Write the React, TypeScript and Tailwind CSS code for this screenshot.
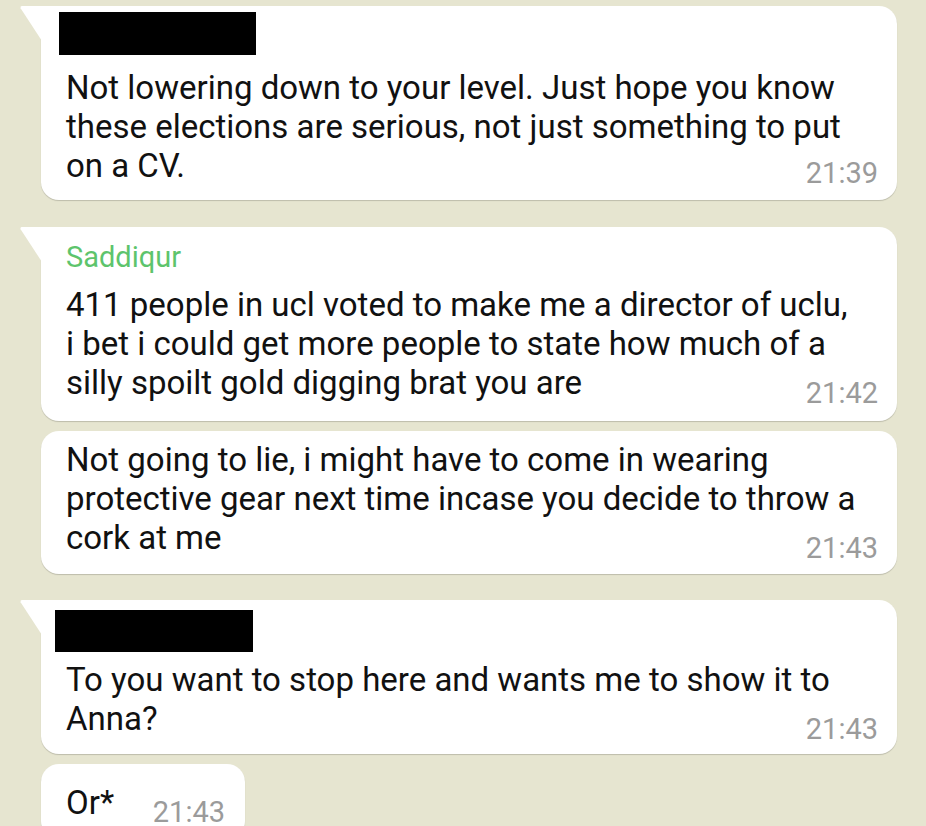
import React from "react";

const Tail = () => (
  <svg
    className="absolute top-0 left-[-21px]"
    width="22"
    height="36"
    viewBox="0 0 22 36"
  >
    <path d="M2 0 H22 V35 L0.6 2.2 Q0 0 2 0 Z" fill="#ffffff" />
  </svg>
);

const Time = ({ t }: { t: string }) => (
  <div className="flex justify-end">
    <span className="text-[29px] leading-[29px] text-[#9b9b9b]">{t}</span>
  </div>
);

const Lines = ({ lines }: { lines: string[] }) => (
  <div className="text-[33px] leading-[39px] text-[#111111] whitespace-nowrap">
    {lines.map((l, i) => (
      <div key={i}>{l}</div>
    ))}
  </div>
);

export default function App() {
  return (
    <div
      className="w-[926px] h-[826px] overflow-hidden bg-[#e6e5d0] pt-[6px] pl-[41px] pr-[29px]"
      style={{ fontFamily: "Roboto, 'Noto Sans', sans-serif" }}
    >
      {/* Bubble 1 */}
      <div className="relative bg-white rounded-r-[18px] rounded-bl-[18px] shadow-[0_1px_1px_rgba(0,0,0,0.18)] pl-[18px] pr-[19px] pt-[6px] pb-[12px]">
        <Tail />
        <div className="w-[197px] h-[43px] bg-black" />
        <div className="pl-[7px] mt-[13px]">
          <Lines
            lines={[
              "Not lowering down to your level. Just hope you know",
              "these elections are serious, not just something to put",
              "on a CV.",
            ]}
          />
          <div className="mt-[-26px]">
            <Time t="21:39" />
          </div>
        </div>
      </div>

      {/* Bubble 2 */}
      <div className="relative mt-[27px] bg-white rounded-r-[18px] rounded-bl-[18px] shadow-[0_1px_1px_rgba(0,0,0,0.18)] pl-[25px] pr-[19px] pt-[15px] pb-[13px]">
        <Tail />
        <div className="text-[29px] leading-[30px] text-[#5dc46c]">Saddiqur</div>
        <div className="mt-[13px]">
          <Lines
            lines={[
              "411 people in ucl voted to make me a director of uclu,",
              "i bet i could get more people to state how much of a",
              "silly spoilt gold digging brat you are",
            ]}
          />
          <div className="mt-[-23px]">
            <Time t="21:42" />
          </div>
        </div>
      </div>

      {/* Bubble 3 */}
      <div className="relative mt-[10px] bg-white rounded-[18px] shadow-[0_1px_1px_rgba(0,0,0,0.18)] pl-[25px] pr-[19px] pt-[9px] pb-[11px]">
        <Lines
          lines={[
            "Not going to lie, i might have to come in wearing",
            "protective gear next time incase you decide to throw a",
            "cork at me",
          ]}
        />
        <div className="mt-[-23px]">
          <Time t="21:43" />
        </div>
      </div>

      {/* Bubble 4 */}
      <div className="relative mt-[26px] bg-white rounded-r-[18px] rounded-bl-[18px] shadow-[0_1px_1px_rgba(0,0,0,0.18)] pl-[14px] pr-[19px] pt-[10px] pb-[10px]">
        <Tail />
        <div className="w-[198px] h-[42px] bg-black" />
        <div className="pl-[11px] mt-[8px]">
          <Lines
            lines={[
              "To you want to stop here and wants me to show it to",
              "Anna?",
            ]}
          />
          <div className="mt-[-23px]">
            <Time t="21:43" />
          </div>
        </div>
      </div>

      {/* Bubble 5 */}
      <div className="mt-[10px] w-[204px] bg-white rounded-[18px] shadow-[0_1px_1px_rgba(0,0,0,0.18)] pl-[25px] pr-[20px] pt-[19px] pb-[12px] flex items-start justify-between">
        <div className="text-[33px] leading-[39px] text-[#111111]">Or*</div>
        <div className="text-[29px] leading-[29px] text-[#9b9b9b] mt-[15px]">21:43</div>
      </div>
    </div>
  );
}
